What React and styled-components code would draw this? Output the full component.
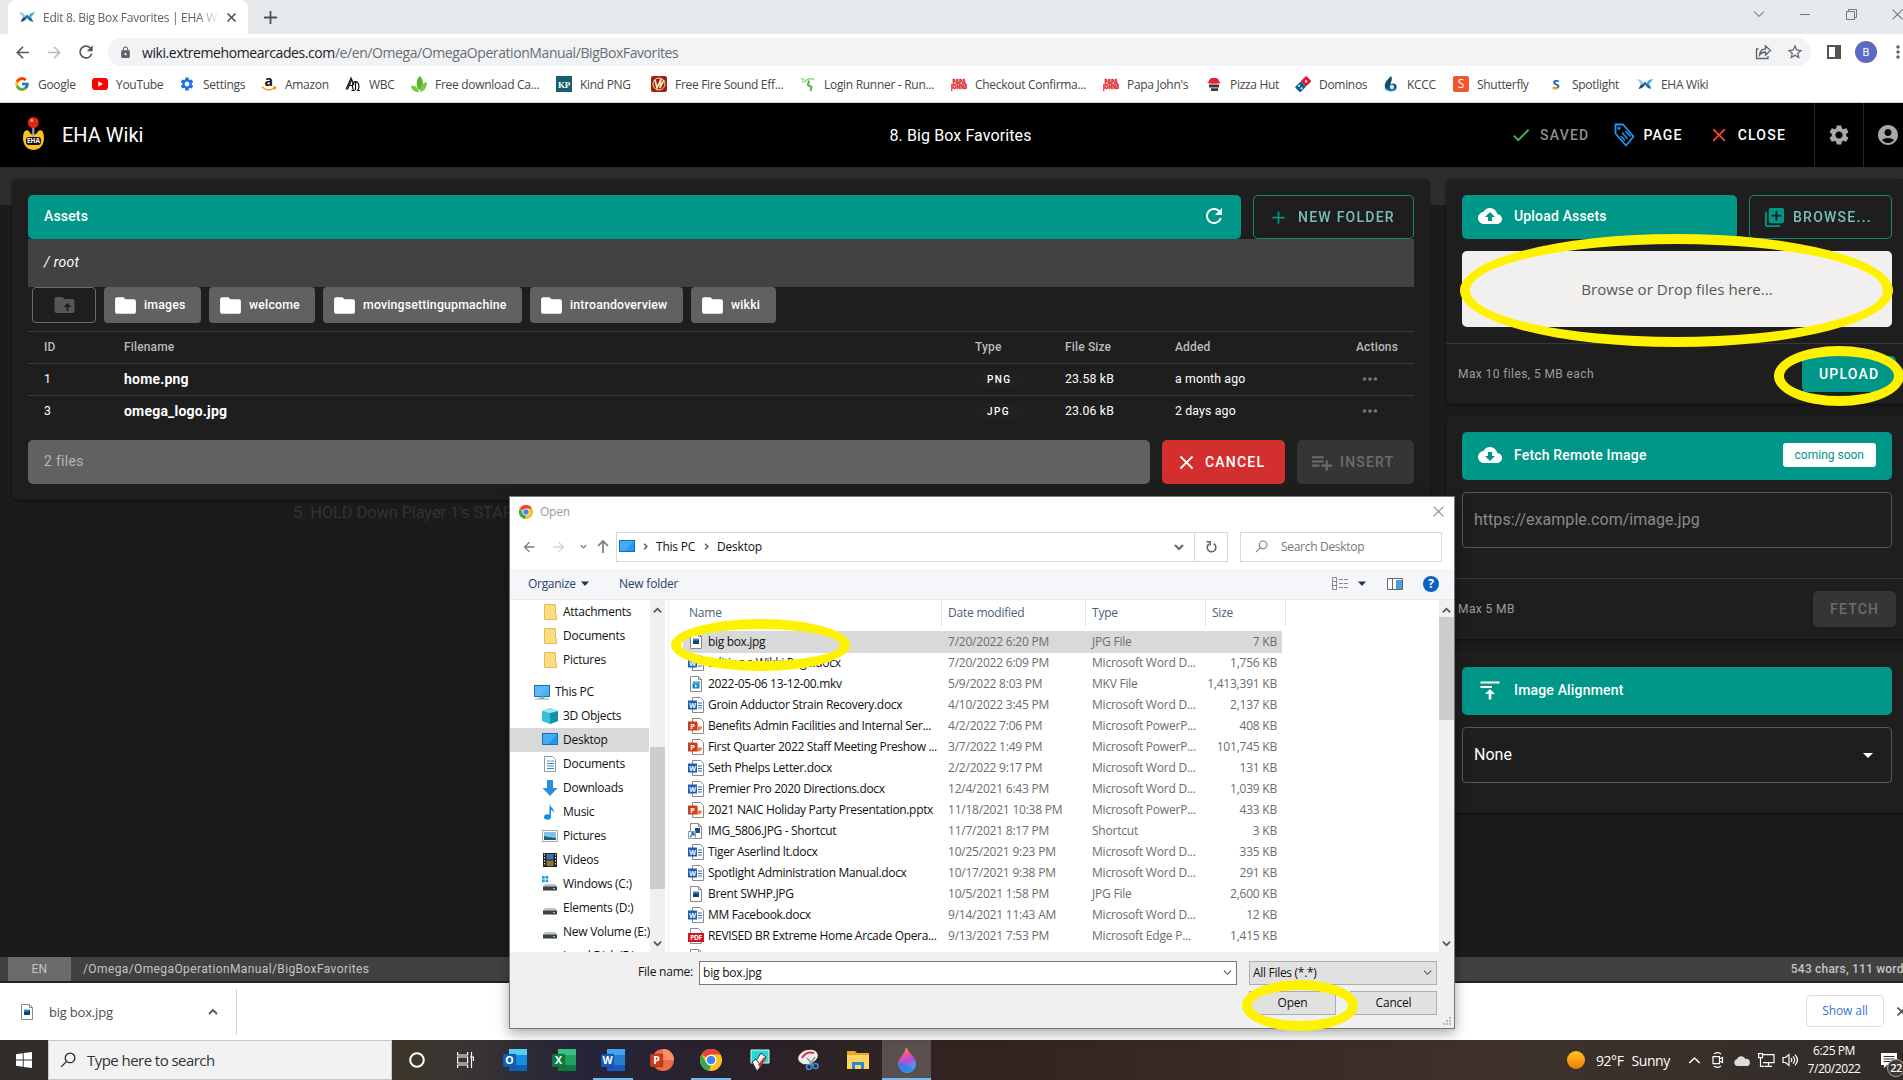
import React from "react";
import styled, { createGlobalStyle, css } from "styled-components";
import {
  MdCheck, MdClose, MdRefresh, MdAdd, MdFolder, MdCloudUpload, MdCloudDownload, MdPlaylistAdd,
  MdSettings, MdAccountCircle, MdLibraryAdd, MdMoreHoriz, MdArrowDropDown,
  MdArrowBack, MdArrowForward, MdLock, MdStarBorder, MdMoreVert,
} from "react-icons/md";
import { FcGoogle } from "react-icons/fc";

const SEGOE = `"Open Sans", "Noto Sans", sans-serif`;
const ROBOTO = `Roboto, "Liberation Sans", sans-serif`;
const TEAL = "#009688";

const GlobalStyle = createGlobalStyle`
  *, *::before, *::after { box-sizing: border-box; }
  html, body { margin: 0; padding: 0; overflow: hidden; background: #1c1c1c; }
  svg { display: block; flex: none; }
`;

const Screen = styled.div`
  position: relative;
  display: flex;
  flex-direction: column;
  width: 1903px;
  height: 1080px;
  overflow: hidden;
  font-family: ${SEGOE};
  white-space: nowrap;
`;

/* ---------- browser chrome ---------- */
const TabStrip = styled.div`
  display: flex;
  align-items: stretch;
  height: 34px;
  padding-left: 8px;
  background: #e6eaed;
`;
const Tab = styled.div`
  display: flex;
  align-items: center;
  width: 240px;
  padding: 0 10px 0 11px;
  background: #fff;
  border-radius: 8px 8px 0 0;
`;
const TabTitle = styled.span`
  width: 176px;
  margin: 0 8px 0 8px;
  overflow: hidden;
  font-size: 12px;
  letter-spacing: -0.28px;
  color: #5c6165;
  mask-image: linear-gradient(90deg, #000 88%, transparent);
`;
const NewTab = styled.div`
  display: flex;
  align-items: center;
  justify-content: center;
  width: 44px;
`;
const WindowControls = styled.div`
  display: flex;
  align-items: center;
  margin: -6px -17px 0 auto;
`;
const ControlCell = styled.div`
  display: flex;
  justify-content: center;
  width: 46px;
`;
const Toolbar = styled.div`
  display: flex;
  align-items: center;
  height: 36px;
  background: #fff;
  color: #5f6368;
`;
const NavButton = styled.div`
  display: flex;
  flex: none;
  justify-content: center;
  width: 32px;
  color: ${(p) => (p.$dim ? "#bbbdc0" : "#54585c")};
  &:first-child { margin-left: 6px; }
`;
const AddressBar = styled.div`
  display: flex;
  flex: none;
  align-items: center;
  width: 1703px;
  height: 28px;
  margin-left: 6px;
  padding: 0 7px 0 11px;
  border-radius: 14px;
  background: #f1f3f4;
`;
const Url = styled.span`
  flex: 1;
  margin-left: 10px;
  font-size: 14px;
  letter-spacing: -0.42px;
  color: #6a6e72;
  b { font-weight: 400; color: #202124; }
`;
const AddressIcon = styled.div`
  margin-left: 14px;
`;
const ToolbarIcons = styled.div`
  display: flex;
  flex: none;
  align-items: center;
  margin-left: 16px;
`;
const Avatar = styled.div`
  display: flex;
  align-items: center;
  justify-content: center;
  width: 22px;
  height: 22px;
  margin: 0 11px 0 14px;
  border-radius: 50%;
  background: #5c6bc0;
  color: #fff;
  font: 11px ${ROBOTO};
`;
const Bookmarks = styled.div`
  display: grid;
  grid-template-columns: 78px 87px 82px 84px 66px 145px 95px 149px 151px 152px 103px 89px 88px 70px 95px 89px 90px;
  align-items: center;
  height: 33px;
  padding: 0 0 4px 14px;
  background: #fff;
  border-bottom: 1px solid #d5d5d5;
`;
const Bookmark = styled.div`
  display: flex;
  align-items: center;
  gap: 8px;
  font-size: 12px;
  letter-spacing: -0.3px;
  color: #43474b;
`;

/* ---------- wiki header ---------- */
const WikiHeader = styled.header`
  display: grid;
  grid-template-columns: 1fr auto 1fr;
  align-items: center;
  height: 64px;
  background: #000;
  color: #fff;
  font-family: ${ROBOTO};
`;
const Brand = styled.div`
  display: flex;
  align-items: center;
  gap: 13px;
  padding-left: 18px;
  font-size: 20px;
`;
const PageTitle = styled.div`
  margin-left: 18px;
  font-size: 16px;
  letter-spacing: 0.1px;
`;
const HeaderActions = styled.div`
  display: flex;
  align-items: center;
  justify-content: flex-end;
  height: 64px;
  margin-right: -9px;
`;
const HeaderButton = styled.div`
  display: flex;
  align-items: center;
  gap: 8px;
  margin-right: ${(p) => p.$after}px;
  font-size: 14px;
  font-weight: 500;
  letter-spacing: 1.2px;
  color: ${(p) => p.$color || "#fff"};
`;
const HeaderIconCell = styled.div`
  display: flex;
  align-items: center;
  justify-content: center;
  width: 49px;
  height: 64px;
  border-left: 1px solid #272727;
  color: #a8a8a8;
`;

/* ---------- workspace ---------- */
const Workspace = styled.main`
  position: relative;
  display: flex;
  align-items: flex-start;
  gap: 16px;
  height: 790px;
  padding: 12px 0 0 12px;
  background: linear-gradient(#2d2d2d 0 38px, #1b1b1b 38px);
  font-family: ${ROBOTO};
`;
const EditorGhost = styled.div`
  position: absolute;
  left: 293px;
  top: 336px;
  font-size: 16.5px;
  letter-spacing: -0.15px;
  color: #323232;
`;
const Card = styled.section`
  position: relative;
  background: #1e1e1e;
  border-radius: 6px;
  box-shadow: 0 1px 3px rgba(0, 0, 0, 0.5);
`;
const AssetsCard = styled(Card)`
  flex: none;
  width: 1418px;
  height: 321px;
  padding: 16px;
`;
const SideColumn = styled.div`
  display: flex;
  flex-direction: column;
  gap: 12px;
  width: 462px;
  flex: none;
`;
const SideCard = styled(Card)`
  height: ${(p) => p.$height}px;
  padding: 16px 16px 0;
`;
const Row = styled.div`
  display: flex;
  gap: 12px;
  margin-top: ${(p) => p.$top || 0}px;
`;
const TealBar = styled.div`
  display: flex;
  align-items: center;
  flex: ${(p) => (p.$width ? "none" : 1)};
  width: ${(p) => (p.$width ? `${p.$width}px` : "auto")};
  height: ${(p) => p.$height || 44}px;
  padding: 0 ${(p) => p.$right || 15}px 2px 16px;
  border-radius: 5px;
  background: ${TEAL};
  color: #fff;
  font-size: 14px;
  font-weight: 500;
  letter-spacing: 0.17px;
  > svg + span { margin-left: 12px; }
  > span + svg { margin-left: auto; }
`;
const OutlineButton = styled.div`
  display: flex;
  align-items: center;
  width: ${(p) => p.$width}px;
  height: 44px;
  padding-left: ${(p) => p.$left}px;
  gap: ${(p) => p.$gap}px;
  border: 1px solid #17897e;
  border-radius: 5px;
  color: #80cbc4;
  font-size: 14px;
  font-weight: 500;
  letter-spacing: 1.25px;
  svg { color: ${TEAL}; }
  span { opacity: 0.92; }
`;
const PathBar = styled.div`
  height: 48px;
  padding: 0 16px;
  line-height: 46px;
  background: #424242;
  color: #fff;
  font-size: 14px;
  font-style: italic;
  letter-spacing: 0.3px;
`;
const Folders = styled.div`
  display: flex;
  gap: 8px;
  padding-left: 4px;
  margin-bottom: 8px;
`;
const FolderChip = styled.div`
  display: flex;
  align-items: center;
  justify-content: ${(p) => (p.$up ? "center" : "flex-start")};
  gap: 6px;
  width: ${(p) => p.$width}px;
  height: 36px;
  padding-left: ${(p) => (p.$up ? 0 : 9)}px;
  border-radius: 4px;
  background: ${(p) => (p.$up ? "transparent" : "#616161")};
  border: ${(p) => (p.$up ? "1px solid #6b6b6b" : "0")};
  color: #fff;
  font-size: 12.3px;
  font-weight: 500;
  letter-spacing: 0.18px;
`;
const TableRow = styled.div`
  display: grid;
  grid-template-columns: 80px 851px 90px 110px 181px 1fr;
  align-items: center;
  height: 32px;
  padding: 0 0 1px 16px;
  border-top: 1px solid #3c3c3c;
  color: #fff;
  font-size: 12.3px;
  letter-spacing: 0.15px;
  ${(p) => p.$head && css`
    color: #bababa;
    font-weight: 500;
    font-size: 12px;
  `}
`;
const FileTitle = styled.b`
  font-size: 14px;
  font-weight: 700;
  letter-spacing: 0.2px;
`;
const TypeTag = styled.span`
  width: 46px;
  padding-left: 10px;
  margin-left: 2px;
  line-height: 17px;
  border-radius: 8px;
  background: #212121;
  font-size: 10px;
  font-weight: 500;
  letter-spacing: 1.4px;
`;
const Dots = styled.span`
  margin-left: 3px;
  color: #727272;
`;
const CountBar = styled.div`
  flex: 1;
  height: 44px;
  padding-left: 16px;
  line-height: 42px;
  border-radius: 5px;
  background: #616161;
  color: #b5b5b5;
  font-size: 14px;
  letter-spacing: 0.3px;
`;
const ActionButton = styled.div`
  display: flex;
  align-items: center;
  gap: ${(p) => p.$gap || 8}px;
  width: ${(p) => p.$width}px;
  height: ${(p) => p.$height || 44}px;
  padding-left: ${(p) => p.$left}px;
  border-radius: 5px;
  background: ${(p) => p.$bg};
  color: ${(p) => p.$color || "#fff"};
  font-size: 14px;
  font-weight: 500;
  letter-spacing: 1.2px;
`;
const DropZone = styled.div`
  width: 430px;
  height: 76px;
  margin-top: 12px;
  border-radius: 5px;
  background: #f1f0ef;
  color: #575757;
  font: 15.1px/77px ${SEGOE};
  text-align: center;
`;
const CardFooter = styled.div`
  display: flex;
  align-items: center;
  justify-content: space-between;
  height: 61px;
  margin: ${(p) => p.$top}px -16px 0;
  padding: 0 12px;
  border-top: 1px solid #383838;
  color: #9d9d9d;
  font-size: 12px;
  letter-spacing: 0.4px;
`;
const Badge = styled.span`
  margin-left: auto;
  padding: 0 12px;
  border-radius: 3px;
  background: #fff;
  color: ${TEAL};
  font-size: 12px;
  font-weight: 400;
  letter-spacing: 0;
  line-height: 24px;
`;
const Field = styled.div`
  display: flex;
  align-items: center;
  justify-content: space-between;
  width: 430px;
  height: 56px;
  margin-top: 12px;
  padding: 0 11px 1px;
  border: 1px solid #565656;
  border-radius: 4px;
  color: ${(p) => p.$color};
  font-size: 16px;
  letter-spacing: 0.03px;
`;

/* ---------- status bar and downloads ---------- */
const StatusBar = styled.div`
  display: flex;
  align-items: center;
  height: 26px;
  padding-left: 8px;
  border-bottom: 2px solid #222;
  background: #414141;
  color: #c4c4c4;
  font-family: ${ROBOTO};
  font-size: 12px;
  letter-spacing: 0.39px;
`;
const Locale = styled.span`
  width: 63px;
  margin-right: 12px;
  line-height: 24px;
  background: #6a6a6a;
  text-align: center;
`;
const WordCount = styled.span`
  margin: 0 -7px 0 auto;
  font-weight: 500;
  letter-spacing: 0.2px;
`;
const DownloadShelf = styled.div`
  display: flex;
  align-items: center;
  height: 57px;
  background: #fff;
`;
const DownloadItem = styled.div`
  display: flex;
  align-items: center;
  gap: 14px;
  width: 237px;
  height: 46px;
  padding: 0 18px 0 19px;
  border-right: 1px solid #cfd1d4;
  color: #4a4e52;
  font-size: 13px;
  letter-spacing: -0.2px;
  > :last-child { margin-left: auto; }
`;
const ShowAll = styled.div`
  width: 78px;
  height: 32px;
  margin: 0 13px 2px auto;
  border: 1px solid #dadce0;
  border-radius: 4px;
  color: #3b72d9;
  font-size: 12px;
  letter-spacing: -0.1px;
  line-height: 30px;
  text-align: center;
`;
const ShelfClose = styled.div`
  margin-right: -3px;
`;

/* ---------- taskbar ---------- */
const Taskbar = styled.div`
  display: flex;
  height: 40px;
  background: linear-gradient(90deg, #302c28 0, #3c362a 400px, #3a3533 460px, #25243a 580px, #2b2228 760px, #33241f 1000px, #3e322b 1500px, #302c29 1903px);
  color: #fff;
`;
const StartButton = styled.div`
  display: flex;
  align-items: center;
  justify-content: center;
  width: 48px;
`;
const SearchBox = styled.div`
  display: flex;
  align-items: center;
  gap: 11px;
  width: 344px;
  padding-left: 11px;
  border: 1px solid #c8c8c8;
  background: #f2f2f2;
  color: #333;
  font-size: 15px;
  letter-spacing: -0.55px;
`;
const TaskIcon = styled.div`
  display: flex;
  align-items: center;
  justify-content: center;
  width: 49px;
  background: ${(p) => (p.$active ? "rgba(255,255,255,.2)" : "none")};
  box-shadow: ${(p) => (p.$active ? "inset 0 -2px #76b9ed" : "none")};
  ${(p) => p.$open && css`
    background: linear-gradient(#76b9ed, #76b9ed) 50% 100% / 40px 2px no-repeat;
  `}
`;
const Tray = styled.div`
  display: flex;
  align-items: center;
  margin: 0 -6px 0 auto;
`;
const Sun = styled.div`
  width: 18px;
  height: 18px;
  margin-right: 11px;
  border-radius: 50%;
  background: linear-gradient(#ffc420, #f07d08);
`;
const Weather = styled.span`
  width: 86px;
  font-size: 14px;
  letter-spacing: -0.45px;
  word-spacing: 5px;
`;
const TrayIcon = styled.div`
  display: flex;
  justify-content: center;
  width: 24px;
`;
const Clock = styled.div`
  width: 64px;
  font-size: 12px;
  letter-spacing: -0.42px;
  line-height: 18px;
  text-align: center;
`;
const Notifications = styled.div`
  position: relative;
  display: flex;
  width: 43px;
  padding-left: 15px;
`;
const NotificationCount = styled.span`
  position: absolute;
  left: 21px;
  top: 6px;
  width: 18px;
  height: 18px;
  border: 1px solid #aaa;
  border-radius: 9px;
  background: #3b3735;
  font-size: 11px;
  font-weight: 600;
  letter-spacing: -0.5px;
  line-height: 15px;
  text-align: center;
`;

/* ---------- file dialog ---------- */
const Dialog = styled.div`
  position: absolute;
  left: 509px;
  top: 496px;
  display: flex;
  flex-direction: column;
  width: 946px;
  height: 533px;
  border: 1px solid #777;
  background: #fff;
  box-shadow: 0 4px 12px rgba(0, 0, 0, 0.35);
  font-size: 12px;
  letter-spacing: -0.22px;
  color: #111;
`;
const DialogTitle = styled.div`
  display: flex;
  align-items: center;
  gap: 7px;
  height: 30px;
  padding: 0 10px 1px 9px;
  color: #999;
  > :last-child { margin-left: auto; }
`;
const DialogNav = styled.div`
  display: flex;
  align-items: center;
  height: 42px;
  padding: 2px 0 5px 10px;
  color: #777;
`;
const NavSlot = styled.div`
  display: flex;
  flex: none;
  justify-content: center;
  width: ${(p) => p.$w}px;
`;
const PathBox = styled.div`
  display: flex;
  align-items: center;
  width: 579px;
  height: 30px;
  padding: 0 10px 0 2px;
  gap: 7px;
  border: 1px solid #d9d9d9;
  color: #111;
  > :last-child { margin-left: auto; }
`;
const Crumb = styled.span`
  margin-right: 1px;
`;
const RefreshBox = styled.div`
  display: flex;
  align-items: center;
  justify-content: center;
  width: 33px;
  height: 30px;
  border: 1px solid #d9d9d9;
  border-left: 0;
`;
const SearchField = styled.div`
  display: flex;
  align-items: center;
  gap: 13px;
  width: 202px;
  height: 30px;
  margin-left: 12px;
  padding-left: 14px;
  border: 1px solid #d9d9d9;
  letter-spacing: -0.3px;
`;
const CommandBar = styled.div`
  display: flex;
  align-items: center;
  height: 31px;
  padding: 0 15px 1px 18px;
  border-bottom: 1px solid #e6e8eb;
  background: #f4f6f9;
  color: #2b4068;
`;
const Organize = styled.div`
  display: flex;
  align-items: center;
  gap: 5px;
  width: 91px;
  letter-spacing: -0.3px;
`;
const ViewTools = styled.div`
  display: flex;
  align-items: center;
  margin-left: auto;
`;
const Help = styled.div`
  width: 16px;
  height: 16px;
  margin-left: 8px;
  border-radius: 50%;
  background: #0a63bd;
  color: #fff;
  font-weight: 700;
  line-height: 16px;
  text-align: center;
`;
const DialogBody = styled.div`
  display: flex;
  height: 352px;
`;
const Tree = styled.div`
  width: 140px;
  overflow: hidden;
`;
const TreeItem = styled.div`
  display: flex;
  align-items: center;
  gap: 5px;
  width: 139px;
  height: 24px;
  padding: 0 0 1px ${(p) => (p.$root ? 24 : 32)}px;
  margin-top: ${(p) => (p.$root ? 8 : 0)}px;
  background: ${(p) => (p.$selected ? "#d9d9d9" : "none")};
  letter-spacing: -0.26px;
`;
const ScrollTrack = styled.div`
  display: flex;
  flex-direction: column;
  align-items: center;
  width: 15px;
  padding: 6px 0 4px;
  background: #f0f0f0;
`;
const ScrollThumb = styled.div`
  width: 15px;
  height: ${(p) => p.$height}px;
  margin: ${(p) => p.$top}px 0 auto;
  background: #cdcdcd;
`;
const FilePane = styled.div`
  flex: 1;
  padding-left: 14px;
  margin-left: 3px;
  border-left: 1px solid #f0f0f0;
  overflow: hidden;
`;
const FileHeader = styled.div`
  display: grid;
  grid-template-columns: 259px 144px 120px 80px;
  height: 26px;
  margin-bottom: 5px;
  color: #4c607a;
  line-height: 25px;
  > span { padding-left: 6px; border-right: 1px solid #e2e2e2; }
`;
const FileRow = styled.div`
  display: grid;
  grid-template-columns: 260px 144px 120px 65px;
  align-items: center;
  width: 599px;
  height: ${(p) => (p.$selected ? 22 : 21)}px;
  padding: 0 0 2px 5px;
  background: ${(p) => (p.$selected ? "#d9d9d9" : "none")};
  color: #6d6d6d;
  > :last-child { justify-self: end; }
`;
const FileName = styled.div`
  display: flex;
  align-items: center;
  gap: 4px;
  color: #111;
  letter-spacing: -0.33px;
`;
const DialogFooter = styled.div`
  display: grid;
  grid-template-columns: 183px 538px 194px;
  column-gap: 6px;
  flex: 1;
  align-content: start;
  padding-top: 9px;
  background: #f0f0f0;
  > :nth-child(3) { margin-left: 6px; }
`;
const FileLabel = styled.div`
  text-align: right;
  line-height: 22px;
`;
const ComboBox = styled.div`
  display: flex;
  align-items: center;
  justify-content: space-between;
  height: 24px;
  padding: 0 4px 1px 3px;
  border: 1px solid ${(p) => (p.$flat ? "#adadad" : "#7a7a7a")};
  background: ${(p) => (p.$flat ? "#e1e1e1" : "#fff")};
  letter-spacing: ${(p) => (p.$flat ? -0.3 : -0.2)}px;
`;
const DialogButtons = styled.div`
  grid-column: 1 / -1;
  display: flex;
  justify-content: flex-end;
  gap: 14px;
  margin-top: 6px;
`;
const DialogButton = styled.div`
  width: 87px;
  height: 24px;
  border: 1px solid #adadad;
  background: #e1e1e1;
  line-height: 21px;
  text-align: center;
`;
const Grip = styled.svg`
  position: absolute;
  right: 2px;
  bottom: 2px;
`;

/* Hand-drawn highlight rings placed over the whole screen. */
const Ring = styled.div`
  position: absolute;
  left: ${(p) => p.$x}px;
  top: ${(p) => p.$y}px;
  width: ${(p) => p.$w}px;
  height: ${(p) => p.$h}px;
  border: 10px solid #fff200;
  border-radius: 50%;
`;

/* ---------- icons ---------- */
const Chevron = ({ size = 10, dir = "down", color = "#555", w = 1.6 }) => {
  const d = { down: "M1 3l4 4 4-4", up: "M1 7l4-4 4 4", right: "M3 1l4 4-4 4" }[dir];
  return <svg width={size} height={size} viewBox="0 0 10 10"><path d={d} fill="none" stroke={color} strokeWidth={w} /></svg>;
};
const Cross = ({ size = 10, color = "#777", w = 1 }) => (
  <svg width={size} height={size} viewBox="0 0 10 10"><path d="M.5.5l9 9M9.5.5l-9 9" stroke={color} strokeWidth={w} /></svg>
);
const Triangle = ({ color = "#1f3358" }) => <svg width="8" height="5" viewBox="0 0 8 5"><path d="M0 .5h8L4 5z" fill={color} /></svg>;
const Butterfly = () => (
  <svg width="16" height="16" viewBox="0 0 16 16">
    <path d="M0 3l4 1 3 3.500L4.500 9z" fill="#8accec" /><path d="M16 3l-4 1-3 3.500L11.500 9z" fill="#45a6dd" />
    <path d="M1.500 13l2-4 3.500-1.500L7 10l-2 2z" fill="#1d4f88" /><path d="M14.500 13l-2-4L9 7.500 9 10l2 2z" fill="#1270ad" />
    <path d="M7 7l1-1.500L9 7l-1 4z" fill="#16324f" />
  </svg>
);
const Magnifier = ({ size = 14, color = "#777", w = 1.1 }) => (
  <svg width={size} height={size} viewBox="0 0 14 14"><circle cx="8.8" cy="5.2" r="4.2" fill="none" stroke={color} strokeWidth={w} /><path d="M5.8 8.2L1 13" stroke={color} strokeWidth={w} /></svg>
);
const ChromeLogo = ({ size = 14 }) => (
  <svg width={size} height={size} viewBox="0 0 24 24">
    <circle cx="12" cy="12" r="12" fill="#fbc116" />
    <path d="M12 12L1.6 6A12 12 0 0 1 22.4 6H12z" fill="#ea4335" />
    <path d="M1.6 6l5.2 9L12 17.2l-2 6.6A12 12 0 0 1 1.6 6z" fill="#34a853" />
    <circle cx="12" cy="12" r="6" fill="#fff" /><circle cx="12" cy="12" r="4.7" fill="#4285f4" />
  </svg>
);
const ReloadDialog = () => (
  <svg width="11" height="13" viewBox="0 0 11 13" fill="none" stroke="#666" strokeWidth="1.6">
    <path d="M7.800 3.800a4.300 4.300 0 1 1-4.800.2" /><path d="M.5 1.700h3.700v3.800" />
  </svg>
);
const AlignTop = () => (
  <svg width="24" height="24" viewBox="0 0 24 24" fill="#fff"><path d="M2.500 3.500h19v2h-19zM2.500 8h11.500v2H2.500zM12 11l5 5h-3.700v5.500h-2.600V16H7z" /></svg>
);
const PageShape = ({ children }) => (
  <svg width="16" height="16" viewBox="0 0 16 16"><path d="M2.500.5h8l3 3v12h-11z" fill="#fff" stroke="#8a8a8a" /><path d="M10.500.5v3h3" fill="none" stroke="#8a8a8a" />{children}</svg>
);
const tileText = { fontFamily: "Open Sans, sans-serif", fontWeight: 700, fill: "#fff" };
const FileIcon = ({ kind }) => {
  if (kind === "word") return (
    <svg width="16" height="16" viewBox="0 0 16 16"><path d="M4.500.5h8l3 3v12h-11z" fill="#fff" stroke="#8a8a8a" /><path d="M10 6h4M10 8.500h4M10 11h4" stroke="#2b6cc4" /><rect y="3.500" width="9" height="9" fill="#1f5fb4" /><text x="4.500" y="10.500" fontSize="7" textAnchor="middle" {...tileText}>W</text></svg>
  );
  if (kind === "ppt") return (
    <svg width="16" height="16" viewBox="0 0 16 16"><path d="M4.500.5h8l3 3v12h-11z" fill="#fff" stroke="#8a8a8a" /><path d="M10 4.500v4h4a4 4 0 1 1-4-4z" fill="#ee7a55" /><rect y="3.500" width="9" height="9" fill="#c8411f" /><text x="4.500" y="10.700" fontSize="7.500" textAnchor="middle" {...tileText}>P</text></svg>
  );
  if (kind === "pdf") return (
    <svg width="16" height="16" viewBox="0 0 16 16"><path d="M2.500.5h8l3 3v12h-11z" fill="#fff" stroke="#8a8a8a" /><rect y="5" width="16" height="9" fill="#d01421" /><text x="8" y="12" fontSize="6.500" textAnchor="middle" {...tileText}>PDF</text></svg>
  );
  if (kind === "mkv") return <PageShape><path d="M5 5.500h7v2H5z" fill="#2aa5d8" /><rect x="4.500" y="7.500" width="7" height="5" fill="#1784c7" /><path d="M7 8.500v3l2.500-1.500z" fill="#fff" /></PageShape>;
  if (kind === "link") return <PageShape><path d="M7 5h5v5H7z" fill="#1a4f92" /><rect x=".5" y="8.500" width="7" height="7" fill="#fff" stroke="#999" /><path d="M2 14l3.500-3.500M3 10h3v3" fill="none" stroke="#1d6fd0" strokeWidth="1.300" /></PageShape>;
  return <PageShape><rect x="5" y="5.500" width="6" height="5.500" fill="#3a86d2" /><path d="M5 11V8.500l2-1.500L8.500 8 11 6.500V11z" fill="#123f75" /></PageShape>;
};
const Monitor = ({ stand }) => (
  <svg width="16" height="16" viewBox="0 0 16 16">
    <rect x=".5" y="1.500" width="15" height="11" fill={stand ? "#4fb0f0" : "#1e9bf0"} stroke="#1a6fb0" /><path d="M1 2h14L6 12H1z" fill="#6cc4ff" opacity=".45" />
    {stand && <path d="M6 13h4v1.500H6zM1 15h14" stroke="#8aa3b5" fill="#bcd" />}
  </svg>
);
const TreeIcon = ({ kind }) => {
  if (kind === "folder") return <svg width="16" height="16" viewBox="0 0 16 16"><path d="M2.500.5h11V10l1 1v4.500h-12z" fill="#fbdc80" stroke="#e3bb55" /></svg>;
  if (kind === "pc") return <Monitor stand />;
  if (kind === "desktop") return <Monitor />;
  if (kind === "cube") return <svg width="16" height="16" viewBox="0 0 16 16"><path d="M0 3l8-3 8 3v10l-8 3-8-3z" fill="#35bfd8" /><path d="M8 5l8-2v10l-8 3z" fill="#1391ad" /><path d="M0 3l8-3 8 3-8 2z" fill="#9ce6f0" /></svg>;
  if (kind === "doc") return <svg width="16" height="16" viewBox="0 0 16 16"><path d="M2.500.5h8l3 3v12h-11z" fill="#fff" stroke="#999" /><path d="M5 5h3M5 7.500h7M5 10h7M5 12.500h7M9 5h3" stroke="#2590d5" /></svg>;
  if (kind === "down") return <svg width="16" height="16" viewBox="0 0 16 16"><path d="M5 0h6v8h4.500L8 16 .5 8H5z" fill="#2b8fe0" /></svg>;
  if (kind === "music") return <svg width="16" height="16" viewBox="0 0 16 16"><ellipse cx="5.500" cy="13" rx="3.500" ry="2.700" fill="#0a8ee8" /><path d="M7.500 13V0c1 4 5 4 4.500 9-.5-2-2-3-3-3v7z" fill="#0a8ee8" /></svg>;
  if (kind === "pics") return <svg width="16" height="16" viewBox="0 0 16 16"><rect x=".5" y="2.500" width="15" height="11" fill="#fff" stroke="#aaa" /><rect x="2" y="4" width="12" height="8" fill="#7fc3ee" /><path d="M2 8l4 1 8 1v2H2z" fill="#1f5d72" /></svg>;
  if (kind === "video") return <svg width="16" height="16" viewBox="0 0 16 16"><rect x="1" y="1" width="14" height="14" fill="#222" /><path d="M2.500 2v12M13.500 2v12" stroke="#ddd" strokeDasharray="1.500 1.500" /><rect x="4.500" y="2" width="7" height="5.500" fill="#3c6fb8" /><rect x="4.500" y="8.500" width="7" height="5.500" fill="#8a7a35" /></svg>;
  return (
    <svg width="16" height="16" viewBox="0 0 16 16">
      <path d="M3 8h10l2 3H1z" fill="#bfc3c6" /><rect x="1" y="10.500" width="14" height="4" fill="#3d4245" /><rect x="11" y="12" width="2" height="1" fill="#5fe37a" />
      {kind === "win" && <path d="M0 0h2.700v2.700H0zM3.500 0h2.700v2.700H3.500zM0 3.500h2.700v2.700H0zM3.500 3.500h2.700v2.700H3.500z" fill="#1ba1e2" />}
    </svg>
  );
};
const S = ({ children, s = 16 }) => <svg width={s} height={s} viewBox="0 0 16 16">{children}</svg>;
const GearBlue = () => <MdSettings size={16} color="#1a73e8" />;
const YouTube = () => <S><rect y="2" width="16" height="12" rx="3" fill="#f00" /><path d="M6.300 5.200v5.600L11 8z" fill="#fff" /></S>;
const AmazonMark = () => (
  <S><text x="7.500" y="10" fontSize="14" textAnchor="middle" {...tileText} fill="#111">a</text><path d="M1 11c4 3.500 9 3.500 13 .5M12 11.300l2.500-.3-.5 2.500" fill="none" stroke="#f90" strokeWidth="1.500" /></S>
);
const Wbc = () => <S><path d="M1 13.500L6 2l3 7M3.500 9.500h4M2.500 13.500L7 3" fill="none" stroke="#111" strokeWidth="1.100" /><path d="M6.500 14.500h2.500c-3-4-1.500-9 1.500-9s5 5 2 9H15M10.500 6v8" fill="none" stroke="#111" strokeWidth="1.200" /></S>;
const Leaf = () => <S><path d="M9 0c-4.500 4-4 10-1 14 5-3 5-10 1-14z" fill="#56b32f" /><path d="M0 10c4-1 7 1 8 6-5 0-7-2-8-6zM16 6c-5 1-7 5-7 10 5-1 7-5 7-10z" fill="#7cc83b" /></S>;
const KindPng = () => <S><rect width="16" height="16" fill="#15606a" /><text x="8" y="11.500" fontSize="9" fontWeight="700" textAnchor="middle" fill="#fff" fontFamily="Liberation Serif, serif">KP</text></S>;
const FireSound = () => <S><rect width="16" height="16" rx="2" fill="#9c2216" /><circle cx="8" cy="8" r="6" fill="none" stroke="#f3d9a0" /><path d="M4 4l2 8 4-9-1 9 4-8" stroke="#fbe9b8" strokeWidth="1.600" fill="none" /></S>;
const Runner = () => <S><path d="M1 2.500l3 1M2 5.500h3M5 6c1-3 5-4 9-2.500" fill="none" stroke="#9bd08c" strokeWidth="1.500" /><path d="M9 4.500L8 9l3.500 2L10.500 15" fill="none" stroke="#55b33c" strokeWidth="2" /></S>;
const PapaJohns = () => (
  <S><g fontFamily="Open Sans, sans-serif" fontWeight="800" fill="#e22a34" textAnchor="middle" stroke="#e22a34" strokeWidth=".3"><text x="8" y="8" fontSize="6.600" textLength="13" lengthAdjust="spacingAndGlyphs">PAPA</text><text x="8" y="13.300" fontSize="6.200" textLength="16" lengthAdjust="spacingAndGlyphs">JOHNS</text></g></S>
);
const PizzaHut = () => <S><path d="M1 7c3-2 2-5 5-5h4c3 0 2 3 5 5-4 1-10 1-14 0z" fill="#e32636" /><path d="M3 8.500h10v3H3zM5 12.200h7V15H5z" fill="#3a3a3a" /></S>;
const Dominos = () => <S><g transform="rotate(45 8 8)"><rect x="4.500" y="0" width="7.500" height="8" rx="1" fill="#e31837" /><rect x="4.500" y="8" width="7.500" height="8" rx="1" fill="#0b648f" /><circle cx="8.300" cy="4" r="1.200" fill="#fff" /><circle cx="6.500" cy="12" r="1" fill="#fff" /><circle cx="10" cy="12" r="1" fill="#fff" /></g></S>;
const Kccc = () => <S><path d="M8 0C4 4 1 7 2 11.500 3 16 12 16.500 13.500 12c1-4-3-6-6-3.500C8 5 10 3 8 0z" fill="#12506e" /><circle cx="9" cy="11" r="2.200" fill="#d7ecf2" /><path d="M2 12c2 3 8 4 11 1" stroke="#3ea0c2" strokeWidth="1.400" fill="none" /></S>;
const Shutterfly = () => <S><rect width="16" height="16" rx="2" fill="#f0562a" /><text x="8" y="12.300" fontSize="12" textAnchor="middle" fill="#fff" fontFamily="Open Sans, sans-serif">S</text></S>;
const Spotlight = () => <S><text x="8" y="13" fontSize="13" textAnchor="middle" {...tileText} fill="#1f63b5">S</text><path d="M4.500 11.500c1 1.500 4 1.800 5.500.5" stroke="#f6b21b" strokeWidth="2" fill="none" /></S>;

const Office = ({ letter, dark, mid, light, round }) => (
  <svg width="24" height="24" viewBox="0 0 24 24">
    {round
      ? <><circle cx="13" cy="12" r="11" fill={mid} /><path d="M13 1a11 11 0 0 1 11 11H13z" fill={light} /></>
      : <><rect x="6" y="1" width="18" height="22" rx="1.500" fill={mid} /><path d="M6 1h18v6H6z" fill={light} /><path d="M6 17h18v6H6z" fill={dark} /></>}
    <rect y="6" width="13" height="13" rx="1" fill={dark} stroke="rgba(0,0,0,.15)" />
    <text x="6.500" y="16.300" fontSize="10.500" textAnchor="middle" {...tileText}>{letter}</text>
  </svg>
);
const TagIcon = () => (
  <svg width="21" height="24" viewBox="0 0 21 24" fill="none" stroke="#2196f3" strokeWidth="1.800" strokeLinejoin="round">
    <path d="M1.500 1.500H9l10.500 12L12 22.500 1.500 10.500z" /><circle cx="5" cy="5.300" r=".7" fill="#2196f3" />
    <path d="M8 9.500l5.500 6.500M11.500 8l5 5.500M7 13l4 4.500" strokeWidth="1.500" />
  </svg>
);
const EhaLogo = () => (
  <svg width="31" height="40" viewBox="0 0 31 40">
    <path d="M6 17c3-3 5-2 6 1 2 2 5 2 7 0 1-3 4-4 6-1 3 9-1 18-9.500 18S3 26 6 17z" fill="#f7c318" />
    <path d="M14.300 11h2v13h-2z" fill="#a9a9a9" /><circle cx="15.300" cy="7.500" r="5.500" fill="#dc2a10" /><circle cx="13.800" cy="5.500" r="1.500" fill="#ff9b86" />
    <rect x="8" y="22" width="15" height="8" rx="3" fill="#111" />
    <text x="15.500" y="28.300" fontSize="6.500" textAnchor="middle" {...tileText}>EHA</text>
  </svg>
);
const FolderUp = () => (
  <svg width="25" height="24" viewBox="0 0 24 24"><path d="M2 6a2 2 0 0 1 2-2h6l2 2h8a2 2 0 0 1 2 2v10a2 2 0 0 1-2 2H4a2 2 0 0 1-2-2z" fill="#565656" /><path d="M15 10l4 4h-3v4h-2v-4h-3z" fill="#1e1e1e" /></svg>
);

/* ---------- data ---------- */
const bookmarks = [
  ["Google", <FcGoogle size={16} />], ["YouTube", <YouTube />], ["Settings", <GearBlue />], ["Amazon", <AmazonMark />],
  ["WBC", <Wbc />], ["Free download Ca...", <Leaf />], ["Kind PNG", <KindPng />], ["Free Fire Sound Eff...", <FireSound />],
  ["Login Runner - Run...", <Runner />], ["Checkout Confirma...", <PapaJohns />], ["Papa John's", <PapaJohns />],
  ["Pizza Hut", <PizzaHut />], ["Dominos", <Dominos />], ["KCCC", <Kccc />], ["Shutterfly", <Shutterfly />],
  ["Spotlight", <Spotlight />], ["EHA Wiki", <Butterfly />],
];
const folders = [["images", 97], ["welcome", 106], ["movingsettingupmachine", 199], ["introandoverview", 153], ["wikki", 85]];
const assets = [
  ["1", "home.png", "PNG", "23.58 kB", "a month ago"],
  ["3", "omega_logo.jpg", "JPG", "23.06 kB", "2 days ago"],
];
const tree = [
  ["Attachments", "folder"], ["Documents", "folder"], ["Pictures", "folder"], ["This PC", "pc"], ["3D Objects", "cube"],
  ["Desktop", "desktop"], ["Documents", "doc"], ["Downloads", "down"], ["Music", "music"], ["Pictures", "pics"],
  ["Videos", "video"], ["Windows (C:)", "win"], ["Elements (D:)", "drive"], ["New Volume (E:)", "drive"], ["Local Disk (F:)", "drive"],
];
const WORD = "Microsoft Word D...";
const PPT = "Microsoft PowerP...";
const files = [
  ["big box.jpg", "7/20/2022 6:20 PM", "JPG File", "7 KB", "jpg"],
  ["Editing a Wikki Page.docx", "7/20/2022 6:09 PM", WORD, "1,756 KB", "word"],
  ["2022-05-06 13-12-00.mkv", "5/9/2022 8:03 PM", "MKV File", "1,413,391 KB", "mkv"],
  ["Groin Adductor Strain Recovery.docx", "4/10/2022 3:45 PM", WORD, "2,137 KB", "word"],
  ["Benefits Admin Facilities and Internal Ser...", "4/2/2022 7:06 PM", PPT, "408 KB", "ppt"],
  ["First Quarter 2022 Staff Meeting Preshow ...", "3/7/2022 1:49 PM", PPT, "101,745 KB", "ppt"],
  ["Seth Phelps Letter.docx", "2/2/2022 9:17 PM", WORD, "131 KB", "word"],
  ["Premier Pro 2020 Directions.docx", "12/4/2021 6:43 PM", WORD, "1,039 KB", "word"],
  ["2021 NAIC Holiday Party Presentation.pptx", "11/18/2021 10:38 PM", PPT, "433 KB", "ppt"],
  ["IMG_5806.JPG - Shortcut", "11/7/2021 8:17 PM", "Shortcut", "3 KB", "link"],
  ["Tiger Aserlind lt.docx", "10/25/2021 9:23 PM", WORD, "335 KB", "word"],
  ["Spotlight Administration Manual.docx", "10/17/2021 9:38 PM", WORD, "291 KB", "word"],
  ["Brent SWHP.JPG", "10/5/2021 1:58 PM", "JPG File", "2,600 KB", "jpg"],
  ["MM Facebook.docx", "9/14/2021 11:43 AM", WORD, "12 KB", "word"],
  ["REVISED BR Extreme Home Arcade Opera...", "9/13/2021 7:53 PM", "Microsoft Edge P...", "1,415 KB", "pdf"],
  ["", "", "", "", "jpg"],
];

/* ---------- sections ---------- */
const BrowserChrome = () => (
  <>
    <TabStrip>
      <Tab><Butterfly /><TabTitle>Edit 8. Big Box Favorites | EHA Wiki</TabTitle><Cross size={9} color="#45484c" w={1.6} /></Tab>
      <NewTab><svg width="13" height="13" viewBox="0 0 13 13"><path d="M6.500 0v13M0 6.500h13" stroke="#4c5054" strokeWidth="1.800" /></svg></NewTab>
      <WindowControls>
        <ControlCell><Chevron size={12} color="#888" w={1} /></ControlCell>
        <ControlCell><svg width="10" height="10"><path d="M0 5.500h10" stroke="#777" /></svg></ControlCell>
        <ControlCell><svg width="11" height="11" fill="none" stroke="#777"><path d="M.5 2.500h8v8h-8zM2.500 2.500v-2h8v8h-2" /></svg></ControlCell>
        <ControlCell><Cross size={11} /></ControlCell>
      </WindowControls>
    </TabStrip>
    <Toolbar>
      <NavButton><MdArrowBack size={19} /></NavButton>
      <NavButton $dim><MdArrowForward size={19} /></NavButton>
      <NavButton><MdRefresh size={20} /></NavButton>
      <AddressBar>
        <MdLock size={13} />
        <Url><b>wiki.extremehomearcades.com</b>/e/en/Omega/OmegaOperationManual/BigBoxFavorites</Url>
        <AddressIcon><svg width="17" height="16" viewBox="0 0 17 16" fill="none" stroke="#5f6368" strokeWidth="1.300"><path d="M3.500 5h-2v9.500H13V12M4.500 11c.5-4 3-6 6-6V2l5 4.500-5 4.500V8c-3 0-4.500 1-6 3z" /></svg></AddressIcon>
        <AddressIcon><MdStarBorder size={18} /></AddressIcon>
      </AddressBar>
      <ToolbarIcons>
        <svg width="14" height="14"><path d="M1 1h12v12H1z" fill="none" stroke="#505458" strokeWidth="2" /><path d="M8 1h6v12H8z" fill="#505458" /></svg>
        <Avatar>B</Avatar>
        <MdMoreVert size={20} />
      </ToolbarIcons>
    </Toolbar>
    <Bookmarks>{bookmarks.map(([name, icon]) => <Bookmark key={name}>{icon}{name}</Bookmark>)}</Bookmarks>
  </>
);

const Assets = () => (
  <AssetsCard>
    <Row>
      <TealBar><span>Assets</span><MdRefresh size={24} /></TealBar>
      <OutlineButton $width={161} $left={14} $gap={9}><MdAdd size={21} /><span>NEW FOLDER</span></OutlineButton>
    </Row>
    <PathBar>/ root</PathBar>
    <Folders>
      <FolderChip $width={64} $up><FolderUp /></FolderChip>
      {folders.map(([name, width]) => <FolderChip key={name} $width={width}><MdFolder size={25} />{name}</FolderChip>)}
    </Folders>
    <TableRow $head><span>ID</span><span>Filename</span><span>Type</span><span>File Size</span><span>Added</span><span>Actions</span></TableRow>
    {assets.map(([id, name, type, size, added]) => (
      <TableRow key={id}>
        <span>{id}</span><FileTitle>{name}</FileTitle><TypeTag>{type}</TypeTag><span>{size}</span><span>{added}</span><Dots><MdMoreHoriz size={22} /></Dots>
      </TableRow>
    ))}
    <Row $top={13}>
      <CountBar>2 files</CountBar>
      <ActionButton $width={123} $left={13} $gap={7} $bg="#d32f2f"><MdClose size={23} />CANCEL</ActionButton>
      <ActionButton $width={117} $left={12} $gap={6} $bg="#353535" $color="#6c6c6c"><MdPlaylistAdd size={25} />INSERT</ActionButton>
    </Row>
  </AssetsCard>
);

const SidePanels = () => (
  <SideColumn>
    <SideCard $height={225}>
      <Row>
        <TealBar $width={275}><MdCloudUpload size={24} /><span>Upload Assets</span></TealBar>
        <OutlineButton $width={143} $left={13} $gap={7}><MdLibraryAdd size={23} /><span>BROWSE...</span></OutlineButton>
      </Row>
      <DropZone>Browse or Drop files here...</DropZone>
      <CardFooter $top={16}>Max 10 files, 5 MB each<ActionButton $width={94} $height={36} $left={17} $bg={TEAL}>UPLOAD</ActionButton></CardFooter>
    </SideCard>
    <SideCard $height={223}>
      <TealBar $width={430} $height={48} $right={16}><MdCloudDownload size={24} /><span>Fetch Remote Image</span><Badge>coming soon</Badge></TealBar>
      <Field $color="#8a8a8a">https://example.com/image.jpg</Field>
      <CardFooter $top={30}>Max 5 MB<ActionButton $width={83} $height={36} $left={17} $bg="#353535" $color="#6c6c6c">FETCH</ActionButton></CardFooter>
    </SideCard>
    <SideCard $height={162}>
      <TealBar $width={430} $height={48}><AlignTop /><span>Image Alignment</span></TealBar>
      <Field $color="#fff">None<MdArrowDropDown size={24} /></Field>
    </SideCard>
  </SideColumn>
);

const OpenDialog = () => (
  <Dialog>
    <DialogTitle><ChromeLogo />Open<Cross size={11} color="#888" /></DialogTitle>
    <DialogNav>
      <NavSlot $w={18}><MdArrowBack size={16} /></NavSlot>
      <NavSlot $w={42}><MdArrowForward size={16} color="#d2d2d2" /></NavSlot>
      <NavSlot $w={6}><Chevron size={7} w={1.8} color="#777" /></NavSlot>
      <NavSlot $w={4} />
      <NavSlot $w={26}><svg width="12" height="13" viewBox="0 0 12 13"><path d="M6 13V1M1 6l5-5 5 5" stroke="#777" strokeWidth="1.700" fill="none" /></svg></NavSlot>
      <PathBox><Monitor /><Chevron dir="right" size={7} w={2} /><Crumb>This PC</Crumb><Chevron dir="right" size={7} w={2} />Desktop<Chevron size={10} w={2} color="#666" /></PathBox>
      <RefreshBox><ReloadDialog /></RefreshBox>
      <SearchField><Magnifier size={13} />Search Desktop</SearchField>
    </DialogNav>
    <CommandBar>
      <Organize>Organize<Triangle /></Organize>New folder
      <ViewTools>
        <svg width="17" height="13" fill="none" stroke="#8a8a8a"><path d="M.5.5h4v12h-4zM.5 4.500h4M.5 8.500h4M7 2.500h4M12 2.500h4M7 6.500h4M12 6.500h4M7 10.500h4M12 10.500h4" /></svg>
        <NavSlot $w={26}><Triangle /></NavSlot>
        <NavSlot $w={40}><svg width="16" height="12"><path d="M.5.5h15v11H.5zM5.500 1v11" fill="#fff" stroke="#666" /><rect x="9" y="2" width="6" height="9" fill="#4a9fe0" /></svg></NavSlot>
        <Help>?</Help>
      </ViewTools>
    </CommandBar>
    <DialogBody>
      <Tree>{tree.map(([name, kind], i) => <TreeItem key={i} $root={kind === "pc"} $selected={kind === "desktop"}><TreeIcon kind={kind} />{name}</TreeItem>)}</Tree>
      <ScrollTrack><Chevron dir="up" w={2} size={9} /><ScrollThumb $top={132} $height={142} /><Chevron w={2} size={9} /></ScrollTrack>
      <FilePane>
        <FileHeader><span>Name</span><span>Date modified</span><span>Type</span><span>Size</span></FileHeader>
        {files.map(([name, date, type, size, kind], i) => (
          <FileRow key={i} $selected={i === 0}>
            <FileName><FileIcon kind={kind} />{name}</FileName><span>{date}</span><span>{type}</span><span>{size}</span>
          </FileRow>
        ))}
      </FilePane>
      <ScrollTrack><Chevron dir="up" w={2} size={9} /><ScrollThumb $top={2} $height={103} /><Chevron w={2} size={9} /></ScrollTrack>
    </DialogBody>
    <DialogFooter>
      <FileLabel>File name:</FileLabel>
      <ComboBox>big box.jpg<Chevron size={9} w={1.2} /></ComboBox>
      <ComboBox $flat>All Files (*.*)<Chevron size={9} w={1.2} /></ComboBox>
      <DialogButtons><DialogButton>Open</DialogButton><DialogButton>Cancel</DialogButton></DialogButtons>
    </DialogFooter>
    <Grip width="9" height="9" fill="#bbb"><path d="M6 0h2v2H6zM6 3h2v2H6zM3 3h2v2H3zM6 6h2v2H6zM3 6h2v2H3zM0 6h2v2H0z" /></Grip>
  </Dialog>
);

const WindowsTaskbar = () => (
  <Taskbar>
    <StartButton><svg width="16" height="16" fill="#fff"><path d="M0 2.200L6.800 1.200v6.300H0zM7.700 1L16 0v7.500H7.700zM0 8.400h6.800v6.400L0 13.800zM7.700 8.400H16V16l-8.300-1.100z" /></svg></StartButton>
    <SearchBox><Magnifier size={16} color="#222" />Type here to search</SearchBox>
    <TaskIcon><svg width="16" height="16"><circle cx="8" cy="8" r="6.800" fill="none" stroke="#fff" strokeWidth="2" /></svg></TaskIcon>
    <TaskIcon><svg width="17" height="16" fill="none" stroke="#fff" strokeWidth="1.200"><path d="M.6 0v3h10V0M.6 16v-3h10v3M.6 5h10v6H.6zM14.500 0v16M13 5h3.500v4" /></svg></TaskIcon>
    <TaskIcon><Office letter="O" dark="#0f63b5" mid="#1490df" light="#50d0f8" /></TaskIcon>
    <TaskIcon><Office letter="X" dark="#107c41" mid="#21a366" light="#33c481" /></TaskIcon>
    <TaskIcon $open><Office letter="W" dark="#185abd" mid="#2b7cd3" light="#41a5ee" /></TaskIcon>
    <TaskIcon><Office letter="P" dark="#c43e1c" mid="#ed6c47" light="#ff8f6b" round /></TaskIcon>
    <TaskIcon $open><ChromeLogo size={22} /></TaskIcon>
    <TaskIcon><svg width="20" height="22" viewBox="0 0 20 22"><path d="M1 1h18v13H1z" fill="#2cd5d8" stroke="#dff" /><path d="M5 13l6-9 5 4-6 10z" fill="#f3f3f3" stroke="#333" /><path d="M2 13l4-3 5 7-4 5z" fill="#f6f6f6" stroke="#333" /><path d="M8 16l6-8 2 2-6 8z" fill="#c43b2b" /></svg></TaskIcon>
    <TaskIcon><svg width="23" height="22" viewBox="0 0 23 22"><ellipse cx="11" cy="8" rx="10" ry="7" fill="#eee" transform="rotate(-18 11 8)" /><path d="M5 9c3-5 8-6 12-5" stroke="#d33" strokeWidth="2" fill="none" /><path d="M10 9l6 7M18 8l-5 8" stroke="#999" strokeWidth="1.600" /><circle cx="12" cy="18" r="2.500" fill="none" stroke="#3a8ee0" strokeWidth="1.600" /><circle cx="18.500" cy="17" r="2.500" fill="none" stroke="#3a8ee0" strokeWidth="1.600" /></svg></TaskIcon>
    <TaskIcon><svg width="22" height="20" viewBox="0 0 22 20"><path d="M0 1h8l2 2h12v4H0z" fill="#e9a928" /><path d="M0 5h22v14H0z" fill="#fcd462" /><path d="M5 19v-7h12v7h-3v-4H8v4z" fill="#2f86d0" /></svg></TaskIcon>
    <TaskIcon $active><svg width="20" height="26" viewBox="0 0 20 26"><defs><linearGradient id="drop" x1="0" y1="0" x2=".3" y2="1"><stop offset="0" stopColor="#ffd23a" /><stop offset=".35" stopColor="#f0568a" /><stop offset=".65" stopColor="#b34be0" /><stop offset="1" stopColor="#28b4f0" /></linearGradient></defs><path d="M9 0c3 6 10 10 10 17a9 9 0 0 1-18 0C1 11 8 8 9 0z" fill="url(#drop)" /><path d="M1 16c4-4 8 4 16 5-4 7-16 5-16-5z" fill="#2b7de8" opacity=".7" /></svg></TaskIcon>
    <Tray>
      <Sun /><Weather>92°F Sunny</Weather>
      <TrayIcon><Chevron dir="up" size={13} color="#fff" w={1.1} /></TrayIcon>
      <TrayIcon><svg width="12" height="16" fill="none" stroke="#fff" strokeWidth="1.200"><path d="M1 4.600h6.500v7H1zM7.500 7l3-1.500v5l-3-1.500M2 2c2-1.600 5-1.600 7 0M2 14c2 1.600 5 1.600 7 0" /></svg></TrayIcon>
      <TrayIcon><svg width="16" height="11" viewBox="0 0 16 11"><path d="M3.500 11a3.500 3.500 0 0 1-.5-6.900A4.600 4.600 0 0 1 11.500 4 3.500 3.500 0 0 1 13 11z" fill="#ddd" /></svg></TrayIcon>
      <TrayIcon><svg width="17" height="14" fill="none" stroke="#fff" strokeWidth="1.200"><path d="M5 1.600h11v8H5M10.500 10v3M7 13.300h7M.6.6h4v4h-4zM2.500 5v8.300h4" /></svg></TrayIcon>
      <TrayIcon><svg width="16" height="14" fill="none" stroke="#fff" strokeWidth="1.200"><path d="M1 4.500h2.500L7 1.500v11l-3.500-3H1zM9 5c1 1.300 1 2.700 0 4M11 3.300c2 2.300 2 5.100 0 7.400M13 1.700c3 3.300 3 7.300 0 10.600" /></svg></TrayIcon>
      <Clock>6:25 PM<br />7/20/2022</Clock>
      <Notifications>
        <svg width="16" height="15" viewBox="0 0 16 15"><path d="M0 0h16v12H6l-3 3v-3H0z" fill="#fff" /><path d="M2.500 3.500h11M2.500 6h11M2.500 8.500h8" stroke="#333" /></svg>
        <NotificationCount>22</NotificationCount>
      </Notifications>
    </Tray>
  </Taskbar>
);

export default function App() {
  return (
    <>
      <GlobalStyle />
      <Screen>
        <BrowserChrome />
        <WikiHeader>
          <Brand><EhaLogo />EHA Wiki</Brand>
          <PageTitle>8. Big Box Favorites</PageTitle>
          <HeaderActions>
            <HeaderButton $color="#8e8e8e" $after={25}><MdCheck size={22} color="#4caf50" />SAVED</HeaderButton>
            <HeaderButton $after={25}><TagIcon />PAGE</HeaderButton>
            <HeaderButton $after={28}><MdClose size={22} color="#f44336" />CLOSE</HeaderButton>
            <HeaderIconCell><MdSettings size={24} /></HeaderIconCell>
            <HeaderIconCell><MdAccountCircle size={24} /></HeaderIconCell>
          </HeaderActions>
        </WikiHeader>
        <Workspace>
          <EditorGhost>5. HOLD Down Player 1's START</EditorGhost>
          <Assets />
          <SidePanels />
        </Workspace>
        <StatusBar>
          <Locale>EN</Locale>/Omega/OmegaOperationManual/BigBoxFavorites
          <WordCount>543 chars, 111 words</WordCount>
        </StatusBar>
        <DownloadShelf>
          <DownloadItem><FileIcon kind="jpg" />big box.jpg<Chevron dir="up" size={10} w={1.8} /></DownloadItem>
          <ShowAll>Show all</ShowAll>
          <ShelfClose><Cross size={9} color="#555" w={1.8} /></ShelfClose>
        </DownloadShelf>
        <WindowsTaskbar />
        <OpenDialog />
        <Ring $x={1460} $y={234} $w={433} $h={113} />
        <Ring $x={1774} $y={346} $w={130} $h={60} />
        <Ring $x={671} $y={619} $w={179} $h={52} />
        <Ring $x={1242} $y={980} $w={116} $h={51} />
      </Screen>
    </>
  );
}
